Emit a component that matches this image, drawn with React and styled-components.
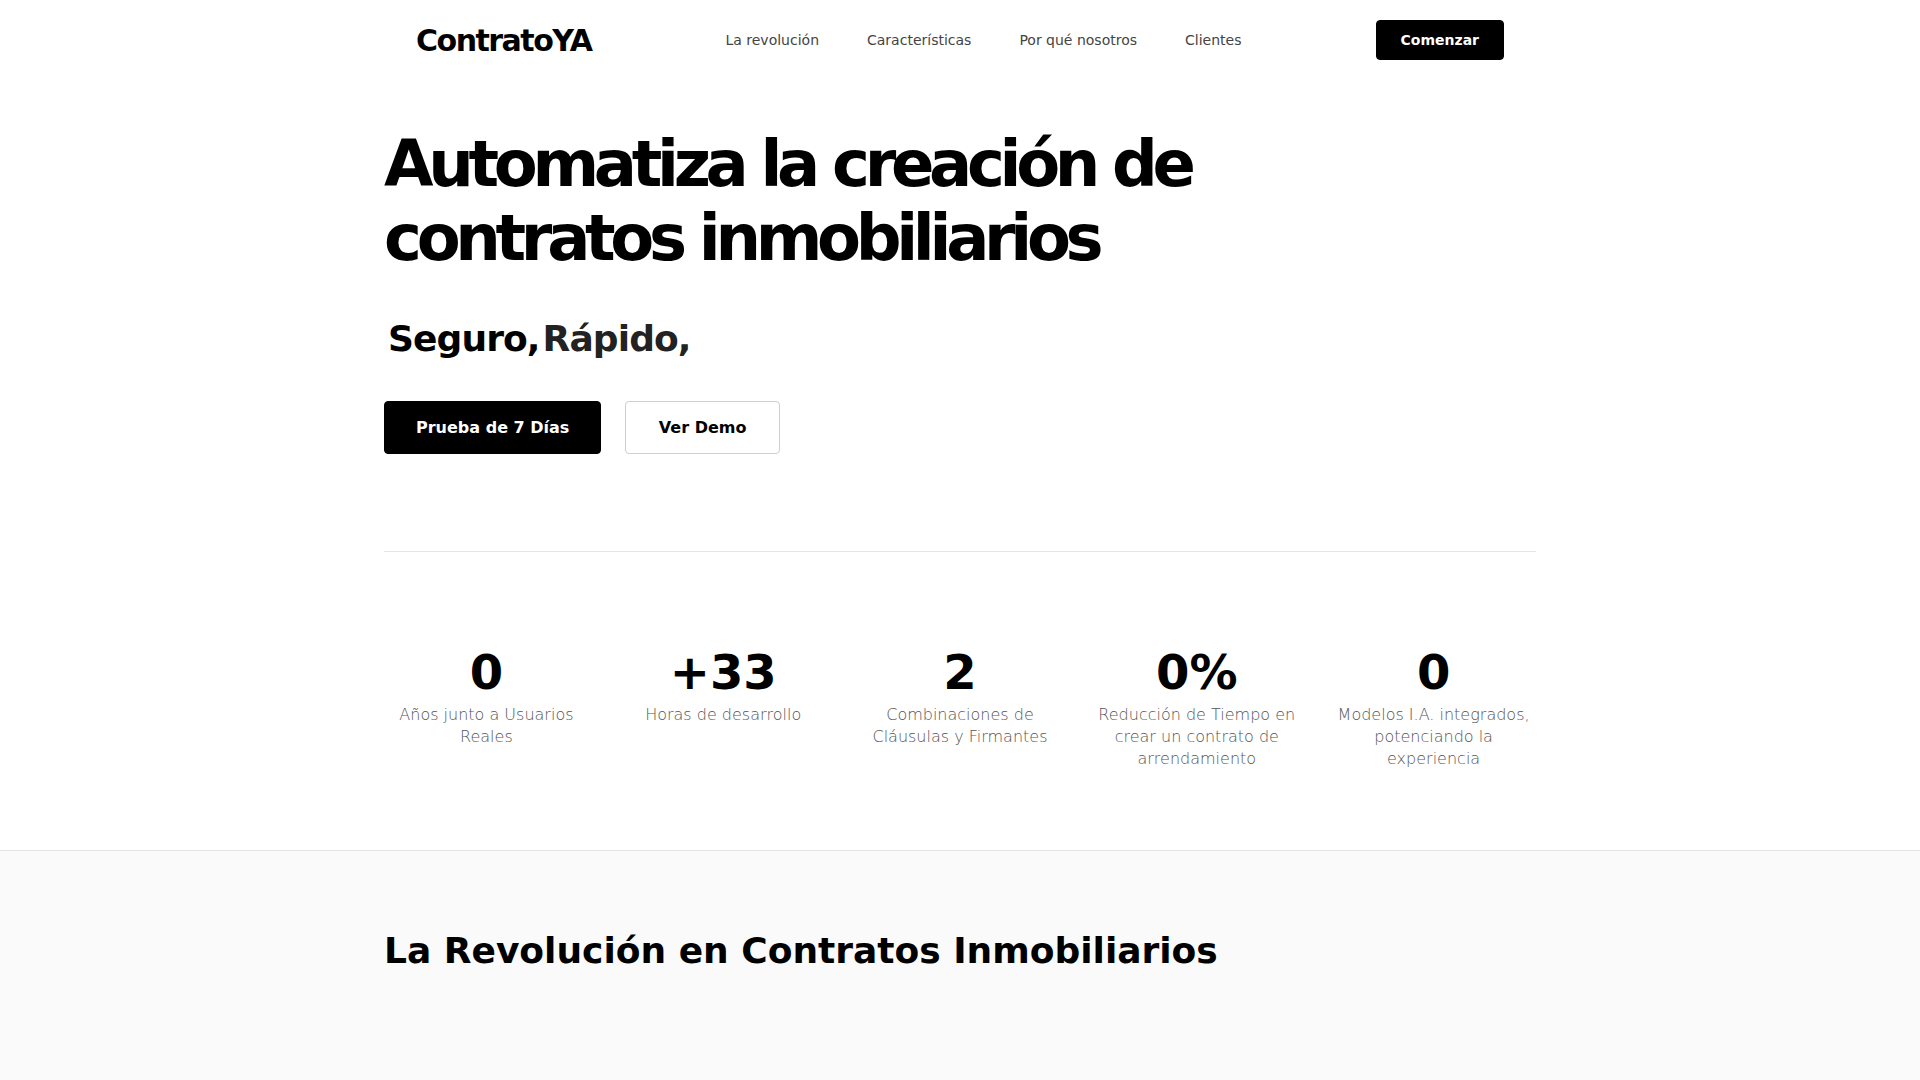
import React from "react";
import styled, { createGlobalStyle } from "styled-components";

const GlobalStyle = createGlobalStyle`
  * { box-sizing: border-box; }
  html, body { margin: 0; padding: 0; background: #ffffff; }
  body {
    font-family: "DejaVu Sans", "Noto Sans", sans-serif;
    color: #000;
    -webkit-font-smoothing: antialiased;
  }
`;

const Header = styled.header`
  height: 80px;
  background: #fff;
`;

const HeaderInner = styled.div`
  max-width: 1152px;
  height: 100%;
  margin: 0 auto;
  padding: 0 32px;
  display: flex;
  align-items: center;
  justify-content: space-between;
`;

const Logo = styled.a`
  font-size: 30px;
  font-weight: 700;
  letter-spacing: -1.5px;
  color: #000;
  text-decoration: none;
`;

const Nav = styled.nav`
  display: flex;
  align-items: center;
  gap: 48px;
`;

const NavLink = styled.a`
  font-size: 14px;
  color: #444;
  text-decoration: none;
`;

const Button = styled.a`
  display: inline-flex;
  align-items: center;
  justify-content: center;
  font-weight: 700;
  text-decoration: none;
  border-radius: 4px;
  font-size: ${(p) => (p.$small ? "14px" : "16px")};
  height: ${(p) => (p.$small ? "40px" : "53px")};
  padding: 0 ${(p) => (p.$small ? "24px" : p.$outline ? "32.5px" : "31px")};
  background: ${(p) => (p.$outline ? "#fff" : "#000")};
  color: ${(p) => (p.$outline ? "#000" : "#fff")};
  border: 1px solid ${(p) => (p.$outline ? "#cfcfcf" : "#000")};
`;

const Container = styled.div`
  max-width: 1152px;
  margin: 0 auto;
`;

const Hero = styled.section`
  padding: 48px 0 97px;
`;

const Title = styled.h1`
  margin: 0;
  font-size: 64px;
  line-height: 1.15;
  font-weight: 700;
  letter-spacing: -5.3px;
  max-width: 900px;
`;

const Tagline = styled.div`
  margin: 43.5px 0 0 4px;
  font-size: 36px;
  line-height: 40px;
  font-weight: 700;
  letter-spacing: -0.9px;
  display: flex;
  gap: 3px;
`;

const TagWord = styled.span`
  color: ${(p) => p.$color || "#000"};
`;

const Actions = styled.div`
  display: flex;
  gap: 24px;
  margin-top: 42px;
`;

const Stats = styled.div`
  border-top: 1px solid #e5e5e5;
  padding: 96px 0 80.5px;
  display: grid;
  grid-template-columns: repeat(5, 1fr);
  gap: 32px;
`;

const Stat = styled.div`
  text-align: center;
  display: flex;
  flex-direction: column;
  align-items: center;
  gap: 8px;
`;

const StatValue = styled.div`
  font-size: 48px;
  line-height: 48px;
  font-weight: 700;
`;

const StatLabel = styled.div`
  font-size: 16px;
  line-height: 22px;
  font-weight: 300;
  color: #555;
`;

const Revolution = styled.section`
  border-top: 1px solid #e5e5e5;
  background: #fafafa;
  padding: 80px 0 240px;
`;

const SectionTitle = styled.h2`
  margin: 0;
  font-size: 36px;
  line-height: 40px;
  font-weight: 700;
`;

const stats = [
  { value: "0", label: "Años junto a Usuarios Reales" },
  { value: "+33", label: "Horas de desarrollo" },
  { value: "2", label: "Combinaciones de Cláusulas y Firmantes" },
  { value: "0%", label: "Reducción de Tiempo en crear un contrato de arrendamiento" },
  { value: "0", label: "Modelos I.A. integrados, potenciando la experiencia" },
];

export default function App() {
  return (
    <>
      <GlobalStyle />
      <Header>
        <HeaderInner>
          <Logo href="#">ContratoYA</Logo>
          <Nav>
            <NavLink href="#">La revolución</NavLink>
            <NavLink href="#">Características</NavLink>
            <NavLink href="#">Por qué nosotros</NavLink>
            <NavLink href="#">Clientes</NavLink>
          </Nav>
          <Button $small href="#">Comenzar</Button>
        </HeaderInner>
      </Header>
      <main>
        <Container>
          <Hero>
            <Title>Automatiza la creación de contratos inmobiliarios</Title>
            <Tagline>
              <TagWord>Seguro,</TagWord>
              <TagWord $color="#222">Rápido,</TagWord>
            </Tagline>
            <Actions>
              <Button href="#">Prueba de 7 Días</Button>
              <Button $outline href="#">Ver Demo</Button>
            </Actions>
          </Hero>
          <Stats>
            {stats.map((s, i) => (
              <Stat key={i}>
                <StatValue>{s.value}</StatValue>
                <StatLabel>{s.label}</StatLabel>
              </Stat>
            ))}
          </Stats>
        </Container>
        <Revolution>
          <Container>
            <SectionTitle>La Revolución en Contratos Inmobiliarios</SectionTitle>
          </Container>
        </Revolution>
      </main>
    </>
  );
}
